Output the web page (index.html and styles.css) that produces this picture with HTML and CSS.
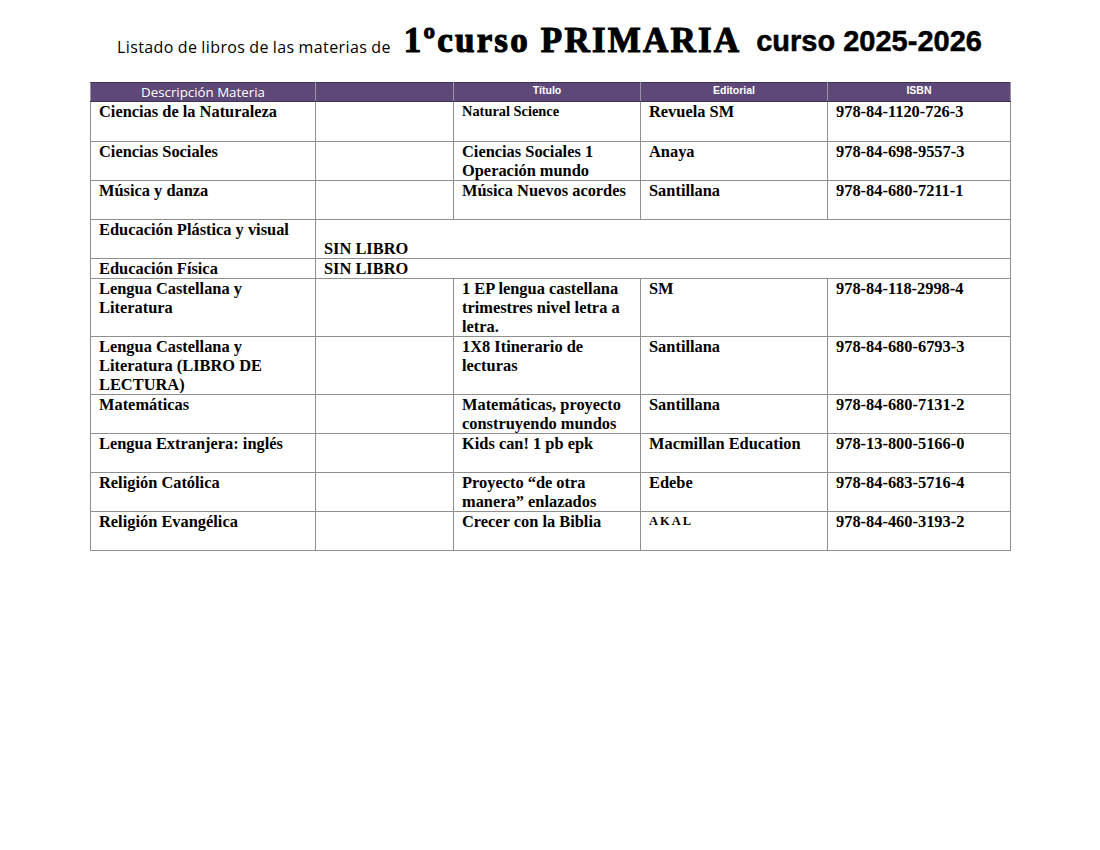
FILE: index.html
```html
<!DOCTYPE html>
<html lang="es">
<head>
<meta charset="utf-8">
<title>Listado de libros 1º curso PRIMARIA</title>
<link rel="stylesheet" href="styles.css">
</head>
<body>
<div class="page">
  <h1 class="title">
    <span class="t-intro">Listado de libros de las materias de</span>
    <span class="t-curso">1ºcurso PRIMARIA</span>
    <span class="t-year">curso 2025-2026</span>
  </h1>
  <table class="books">
    <colgroup>
      <col class="c1"><col class="c2"><col class="c3"><col class="c4"><col class="c5">
    </colgroup>
    <thead>
      <tr>
        <th class="h-desc">Descripción Materia</th>
        <th></th>
        <th>Título</th>
        <th>Editorial</th>
        <th>ISBN</th>
      </tr>
    </thead>
    <tbody>
      <tr class="r2 first">
        <td>Ciencias de la Naturaleza</td><td></td>
        <td class="small">Natural Science</td><td>Revuela SM</td><td>978-84-1120-726-3</td>
      </tr>
      <tr class="r2">
        <td>Ciencias Sociales</td><td></td>
        <td>Ciencias Sociales 1 Operación mundo</td><td>Anaya</td><td>978-84-698-9557-3</td>
      </tr>
      <tr class="r2">
        <td>Música y danza</td><td></td>
        <td>Música Nuevos acordes</td><td>Santillana</td><td>978-84-680-7211-1</td>
      </tr>
      <tr class="r2">
        <td>Educación Plástica y visual</td>
        <td colspan="4" class="bottom">SIN LIBRO</td>
      </tr>
      <tr class="r1">
        <td>Educación Física</td>
        <td colspan="4">SIN LIBRO</td>
      </tr>
      <tr>
        <td>Lengua Castellana y Literatura</td><td></td>
        <td>1 EP lengua castellana trimestres nivel letra a letra.</td><td>SM</td><td>978-84-118-2998-4</td>
      </tr>
      <tr>
        <td>Lengua Castellana y Literatura (LIBRO DE LECTURA)</td><td></td>
        <td>1X8 Itinerario de lecturas</td><td>Santillana</td><td>978-84-680-6793-3</td>
      </tr>
      <tr class="r2">
        <td>Matemáticas</td><td></td>
        <td>Matemáticas, proyecto construyendo mundos</td><td>Santillana</td><td>978-84-680-7131-2</td>
      </tr>
      <tr class="r2">
        <td>Lengua Extranjera: inglés</td><td></td>
        <td>Kids can! 1 pb epk</td><td>Macmillan Education</td><td>978-13-800-5166-0</td>
      </tr>
      <tr class="r2">
        <td>Religión Católica</td><td></td>
        <td>Proyecto “de otra manera” enlazados</td><td>Edebe</td><td>978-84-683-5716-4</td>
      </tr>
      <tr class="r2">
        <td>Religión Evangélica</td><td></td>
        <td>Crecer con la Biblia</td><td class="akal">AKAL</td><td>978-84-460-3193-2</td>
      </tr>
    </tbody>
  </table>
</div>
</body>
</html>
```

FILE: styles.css
```css
html, body {
  margin: 0;
  padding: 0;
  background: #ffffff;
}

.page {
  padding: 20px 0 0 90px;
}

.title {
  display: flex;
  align-items: baseline;
  margin: 0 0 0 27px;
  height: 62px;
  font-weight: normal;
  color: #000;
  white-space: nowrap;
}

.t-intro {
  position: relative;
  top: 2px;
  font-family: "Open Sans", "Liberation Sans", sans-serif;
  font-size: 16px;
  letter-spacing: 0.4px;
  word-spacing: -0.6px;
}

.t-curso {
  position: relative;
  top: 1px;
  margin-left: 13px;
  font-family: "Liberation Serif", "Times New Roman", serif;
  font-weight: 900;
  font-size: 35px;
  letter-spacing: 2.2px;
  -webkit-text-stroke: 1.1px #000;
}

.t-year {
  margin-left: 15px;
  font-family: "Liberation Sans", Arial, sans-serif;
  font-weight: bold;
  font-size: 29px;
  -webkit-text-stroke: 0.5px #000;
}

.books {
  border-collapse: collapse;
  table-layout: fixed;
  width: 920px;
  font-family: "Liberation Serif", "Times New Roman", serif;
  font-weight: bold;
  font-size: 16.4px;
  line-height: 19px;
  color: #000;
}

.c1 { width: 225px; }
.c2 { width: 138px; }
.c3 { width: 187px; }
.c4 { width: 187px; }
.c5 { width: 183px; }

.books thead th {
  background: #5d4878;
  color: #ffffff;
  height: 18px;
  padding: 0;
  border-left: 1px solid #9a93a6;
  border-right: 1px solid #9a93a6;
  border-top: 1px solid #3e3350;
  border-bottom: 1px solid #3e3350;
  font-family: "Liberation Sans", Arial, sans-serif;
  font-size: 10.5px;
  font-weight: bold;
  line-height: 14px;
  vertical-align: top;
  text-align: center;
}

.books thead th.h-desc {
  font-family: "Open Sans", "Liberation Sans", sans-serif;
  font-size: 13.3px;
  font-weight: normal;
  line-height: 18px;
}

.books td {
  border: 1px solid #8f8f8f;
  padding: 0 6px 0 8px;
  vertical-align: top;
  text-align: left;
}

.books tr.r2 td { height: 38px; }
.books tr.first td { height: 39px; }
.books tr.r1 td { height: 18px; }

.books td.bottom { vertical-align: bottom; }

.books td.small {
  font-size: 14.4px;
}

.books td.akal {
  font-size: 12.5px;
  letter-spacing: 2px;
}
```
